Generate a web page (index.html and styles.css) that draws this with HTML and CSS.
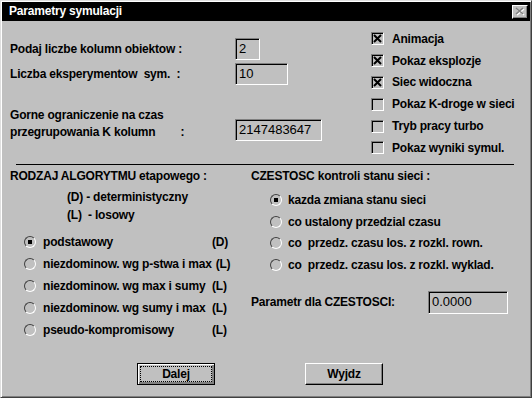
FILE: index.html
```html
<!DOCTYPE html>
<html lang="pl">
<head>
    <meta charset="UTF-8">
    <title>Parametry symulacji</title>
    <link rel="stylesheet" href="styles.css">
</head>
<body>
    <div class="window">
        <div class="titlebar">
            <span class="title">Parametry symulacji</span>
            <span class="close-btn">
                <svg width="10" height="9" viewBox="0 0 10 9">
                    <path d="M2 2L9 8M9 2L2 8" stroke="#fff" stroke-width="1.6"/>
                    <path d="M1 1L8 7M8 1L1 7" stroke="#808080" stroke-width="1.6"/>
                </svg>
            </span>
        </div>

        <div class="content">
            <div class="top">
                <div class="fields">
                    <div class="field">
                        <div class="field-label">Podaj liczbe kolumn obiektow :</div>
                        <div class="edit edit-small">2</div>
                    </div>
                    <div class="field field-2">
                        <div class="field-label">Liczba eksperymentow  sym.  :</div>
                        <div class="edit edit-mid">10</div>
                    </div>
                    <div class="field field-3">
                        <div class="field-label multi">Gorne ograniczenie na czas
przegrupowania K kolumn        :</div>
                        <div class="edit edit-wide">2147483647</div>
                    </div>
                </div>

                <div class="checks">
                    <div class="check-row"><span class="checkbox checked"><svg width="9" height="9" viewBox="0 0 9 9"><path d="M1 1L8 8M8 1L1 8" stroke="#000" stroke-width="2"/></svg></span>Animacja</div>
                    <div class="check-row"><span class="checkbox checked"><svg width="9" height="9" viewBox="0 0 9 9"><path d="M1 1L8 8M8 1L1 8" stroke="#000" stroke-width="2"/></svg></span>Pokaz eksplozje</div>
                    <div class="check-row"><span class="checkbox checked"><svg width="9" height="9" viewBox="0 0 9 9"><path d="M1 1L8 8M8 1L1 8" stroke="#000" stroke-width="2"/></svg></span>Siec widoczna</div>
                    <div class="check-row"><span class="checkbox"></span>Pokaz K-droge w sieci</div>
                    <div class="check-row"><span class="checkbox"></span>Tryb pracy turbo</div>
                    <div class="check-row"><span class="checkbox"></span>Pokaz wyniki symul.</div>
                </div>
            </div>

            <div class="sep"></div>

            <div class="bottom">
                <div class="algo">
                    <div class="group-title">RODZAJ ALGORYTMU etapowego :</div>
                    <div class="legend legend-first">(D) - deterministyczny</div>
                    <div class="legend">(L)  - losowy</div>
                    <div class="radios">
                        <div class="radio-row"><span class="radio selected"></span><span class="radio-text">podstawowy</span><span class="kind">(D)</span></div>
                        <div class="radio-row"><span class="radio"></span><span class="radio-text">niezdominow. wg p-stwa i max</span><span class="kind">(L)</span></div>
                        <div class="radio-row"><span class="radio"></span><span class="radio-text">niezdominow. wg max i sumy</span><span class="kind">(L)</span></div>
                        <div class="radio-row"><span class="radio"></span><span class="radio-text">niezdominow. wg sumy i max</span><span class="kind">(L)</span></div>
                        <div class="radio-row"><span class="radio"></span><span class="radio-text">pseudo-kompromisowy</span><span class="kind">(L)</span></div>
                    </div>
                </div>

                <div class="freq">
                    <div class="group-title">CZESTOSC kontroli stanu sieci :</div>
                    <div class="radios freq-radios">
                        <div class="radio-row"><span class="radio selected"></span>kazda zmiana stanu sieci</div>
                        <div class="radio-row"><span class="radio"></span>co ustalony przedzial czasu</div>
                        <div class="radio-row"><span class="radio"></span>co  przedz. czasu los. z rozkl. rown.</div>
                        <div class="radio-row"><span class="radio"></span>co  przedz. czasu los. z rozkl. wyklad.</div>
                    </div>
                    <div class="param">
                        <div class="param-label">Parametr dla CZESTOSCI:</div>
                        <div class="edit edit-param">0.0000</div>
                    </div>
                </div>
            </div>

            <div class="buttons">
                <div class="btn default">Dalej</div>
                <div class="btn">Wyjdz</div>
            </div>
        </div>
    </div>
</body>
</html>
```

FILE: styles.css
```css
body {
    margin: 0;
    background-color: #c0c0c0;
    font-family: "Liberation Sans", Arial, sans-serif;
    font-size: 12px;
    font-weight: bold;
    letter-spacing: -0.2px;
    color: #000;
}

.window {
    width: 532px;
    height: 398px;
    box-sizing: border-box;
    border: 1px solid;
    border-color: #dfdfdf #404040 #404040 #dfdfdf;
    padding: 1px;
    box-shadow: inset 1px 1px 0 #fff, inset -1px -1px 0 #808080;
    background-color: #c0c0c0;
}

.titlebar {
    height: 19px;
    background-color: #000;
    color: #fff;
    display: flex;
    align-items: center;
    justify-content: space-between;
    padding: 0 2px 0 7px;
}

.title {
    line-height: 19px;
}

.close-btn {
    width: 16px;
    height: 14px;
    box-sizing: border-box;
    background-color: #c0c0c0;
    border: 1px solid;
    border-color: #fff #000 #000 #fff;
    box-shadow: inset -1px -1px 0 #808080;
    display: flex;
    align-items: center;
    justify-content: center;
}

.content {
    padding: 0 8px;
}

/* top part: edit fields + checkboxes */
.top {
    height: 143px;
    display: flex;
}

.fields {
    width: 361px;
    padding-top: 17px;
}

.field {
    display: flex;
    align-items: center;
    height: 22px;
}

.field-2 {
    margin-top: 3px;
}

.field-3 {
    margin-top: 22px;
    height: auto;
    align-items: flex-end;
}

.field-label {
    width: 225px;
    white-space: pre;
}

.field-label.multi {
    line-height: 17px;
}

.edit {
    height: 22px;
    box-sizing: border-box;
    border: 1px solid;
    border-color: #808080 #fff #fff #808080;
    box-shadow: inset 1px 1px 0 #000;
    padding: 2px 0 0 3px;
    line-height: 16px;
    font-weight: normal;
    font-size: 13px;
    letter-spacing: 0;
}

.edit-small { width: 25px; }
.edit-mid { width: 53px; }
.edit-wide { width: 87px; }
.edit-param { width: 80px; height: 23px; }

.checks {
    padding-top: 7px;
}

.check-row {
    display: flex;
    align-items: center;
    height: 21.8px;
}

.checkbox {
    width: 13px;
    height: 13px;
    box-sizing: border-box;
    border: 1px solid;
    border-color: #808080 #fff #fff #808080;
    box-shadow: inset 1px 1px 0 #000;
    margin-right: 8px;
    display: flex;
    align-items: center;
    justify-content: center;
}

.sep {
    height: 1px;
    background-color: #000;
    margin: 0 8px 0 6px;
}

/* bottom part: radio groups */
.bottom {
    height: 180px;
    display: flex;
}

.algo {
    width: 241px;
}

.group-title {
    margin-top: 2px;
    line-height: 18px;
}

.legend {
    padding-left: 57px;
    line-height: 18px;
    white-space: pre;
}

.legend-first {
    margin-top: 3px;
}

.radios {
    margin-top: 7px;
    padding-left: 14px;
}

.radio-row {
    display: flex;
    align-items: center;
    height: 22px;
    white-space: pre;
}

.radio {
    width: 12px;
    height: 12px;
    box-sizing: border-box;
    border-radius: 50%;
    border: 1px solid;
    border-color: #404040 #fff #fff #404040;
    margin-right: 7px;
    display: flex;
    align-items: center;
    justify-content: center;
}

.radio.selected::after {
    content: "";
    width: 4px;
    height: 4px;
    background-color: #000;
}

.radio-text {
    min-width: 165px;
    margin-right: 4px;
}

.freq-radios {
    margin-top: 4px;
    padding-left: 19px;
}

.freq-radios .radio-row {
    height: 21.7px;
}

.freq-radios .radio {
    margin-right: 6px;
}

.param {
    margin-top: 15px;
    display: flex;
    align-items: center;
}

.param-label {
    width: 177px;
}

/* buttons */
.buttons {
    margin-top: 18px;
    padding-left: 127px;
    display: flex;
    gap: 90px;
}

.btn {
    width: 78px;
    height: 22px;
    box-sizing: border-box;
    border: 1px solid;
    border-color: #fff #000 #000 #fff;
    box-shadow: inset -1px -1px 0 #808080;
    display: flex;
    align-items: center;
    justify-content: center;
}

.btn.default {
    border-color: #000;
    box-shadow: inset 1px 1px 0 #fff, inset -1px -1px 0 #808080, inset -2px -2px 0 #808080;
    outline: 1px dotted #000;
    outline-offset: -4px;
}
```
